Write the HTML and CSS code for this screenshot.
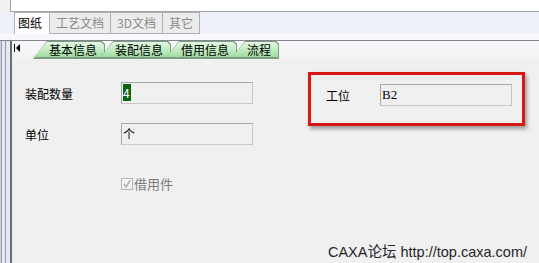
FILE: index.html
```html
<!DOCTYPE html>
<html lang="zh-CN">
<head>
    <meta charset="UTF-8">
    <title>装配信息</title>
    <link rel="stylesheet" href="styles.css">
</head>
<body>
    <div class="app">
        <div class="blank"></div>
        <div class="doc-tabs">
            <span class="doc-tab active">图纸</span>
            <span class="doc-tab">工艺文档</span>
            <span class="doc-tab">3D文档</span>
            <span class="doc-tab">其它</span>
        </div>
        <div class="body">
            <div class="side"></div>
            <div class="panel">
                <div class="page-tabs">
                    <svg class="first-btn" width="6" height="8" viewBox="0 0 6 8">
                        <rect x="0" y="0" width="1" height="8" fill="#000"/>
                        <path d="M6 0 L2 4 L6 8 Z" fill="#000"/>
                    </svg>
                    <div class="page-tab"><span>基本信息</span></div>
                    <div class="page-tab"><span>装配信息</span></div>
                    <div class="page-tab"><span>借用信息</span></div>
                    <div class="page-tab"><span>流程</span></div>
                </div>
                <div class="content">
                    <div class="col-left">
                        <div class="field">
                            <label>装配数量</label>
                            <div class="input"><span class="sel">4</span></div>
                        </div>
                        <div class="field">
                            <label>单位</label>
                            <div class="input">个</div>
                        </div>
                        <div class="check">
                            <svg width="12" height="12" viewBox="0 0 12 12">
                                <rect x="0.5" y="0.5" width="11" height="11" fill="#f4f4f4" stroke="#b4b4b4"/>
                                <path d="M3 6 L5 9 L9 2.5" fill="none" stroke="#b0b0b0" stroke-width="1.5"/>
                            </svg>
                            <span>借用件</span>
                        </div>
                    </div>
                    <div class="mark">
                        <div class="field">
                            <label>工位</label>
                            <div class="input code">B2</div>
                        </div>
                    </div>
                    <div class="watermark">CAXA论坛 http://top.caxa.com/</div>
                </div>
            </div>
        </div>
    </div>
</body>
</html>
```

FILE: styles.css
```css
body {
    margin: 0;
    width: 539px;
    height: 263px;
    overflow: hidden;
    background: #f0f0f0;
    font-family: "SimSun", "Noto Sans CJK SC", sans-serif;
    font-size: 12px;
    color: #000;
}
.app {
    display: flex;
    flex-direction: column;
    height: 263px;
}
.blank {
    height: 11px;
    margin-left: 10px;
    background: #fff;
    border-left: 1px solid #a4a4ac;
    border-bottom: 1px solid #a4a4ac;
}
.doc-tabs {
    display: flex;
    align-items: flex-start;
    height: 28px;
    padding-left: 14px;
    background: linear-gradient(#eef0f8 0 21px, #f8f8fc 21px);
    border-bottom: 1px solid #84848c;
}
.doc-tab {
    height: 20px;
    line-height: 20px;
    padding: 0 6px;
    background: #ececec;
    border: 1px solid #b0b0b0;
    border-left: none;
    color: #8a8a8a;
}
.doc-tab.active {
    height: 21px;
    padding: 0 7px 0 3px;
    background: #fff;
    border-left: 1px solid #b0b0b0;
    border-bottom: none;
    color: #000;
}
.body {
    display: flex;
    flex: 1;
}
.side {
    width: 12px;
    background: linear-gradient(to right, #d0d0d8 0 1px, #9c9ca8 1px 2px, #e6e8f4 2px 5px, #9898a8 5px 6px, #e6e8f4 6px 10px, #6c6c78 10px 12px);
}
.panel {
    flex: 1;
    display: flex;
    flex-direction: column;
}
.page-tabs {
    display: flex;
    align-items: flex-end;
    height: 18px;
    padding-left: 2px;
    background: linear-gradient(#f8f8fc, #f2f2f4);
}
.first-btn {
    align-self: flex-start;
    margin-top: 3px;
    margin-right: 13px;
}
.page-tab {
    height: 16px;
    margin-left: -6px;
    padding: 1px;
    background: #7f9c82;
    clip-path: polygon(14px 0, calc(100% - 3px) 0, 100% 3px, 100% 100%, 0 100%);
}
.page-tab:first-of-type {
    margin-left: 0;
}
.page-tab span {
    display: block;
    height: 15px;
    line-height: 15px;
    padding: 0 7px 0 15px;
    background: linear-gradient(#e4f7e4, #bde9bd 60%, #9fdca0);
    clip-path: polygon(13px 0, calc(100% - 3px) 0, 100% 3px, 100% 100%, 0 100%);
}
.content {
    position: relative;
    flex: 1;
    display: flex;
    align-items: flex-start;
}
.col-left {
    display: flex;
    flex-direction: column;
    gap: 19px;
    padding: 23px 0 0 13px;
}
.field {
    display: flex;
    align-items: center;
}
.field label {
    width: 96px;
}
.input {
    box-sizing: border-box;
    width: 132px;
    height: 22px;
    padding: 2px 1px;
    line-height: 16px;
    background: #f0f0f0;
    border: 1px solid #a8a8a8;
    border-right-color: #c8c8c8;
    border-bottom-color: #c8c8c8;
}
.sel {
    background: #0b640f;
    color: #fff;
    padding: 0 1px 0 0;
}
.input.code {
    font-family: "Liberation Serif", serif;
    font-size: 13px;
}
.check {
    display: flex;
    align-items: center;
    gap: 1px;
    margin: 10px 0 0 96px;
    color: #7c7c7c;
    font-size: 13px;
}
.mark {
    margin: 13px 0 0 55px;
    padding: 9px 10px 17px 15px;
    border: 3px solid #d71616;
    box-shadow: 2px 3px 4px rgba(0, 0, 0, 0.35);
}
.mark .field label {
    width: 54px;
}
.watermark {
    position: absolute;
    right: 12px;
    bottom: 2px;
    font-family: "Liberation Sans", "Noto Sans CJK SC", sans-serif;
    font-size: 14.5px;
    color: #262626;
}
```
